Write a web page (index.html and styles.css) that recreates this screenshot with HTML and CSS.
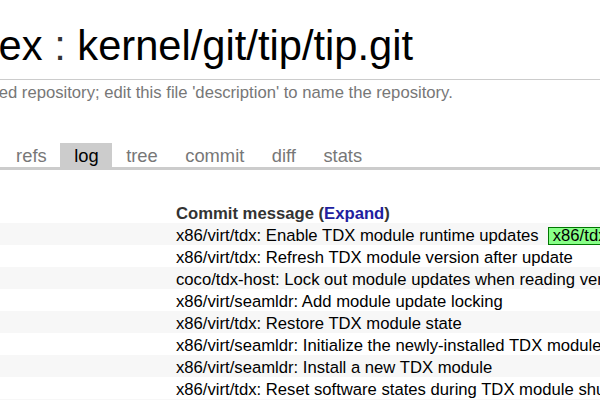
FILE: index.html
```html
<!DOCTYPE html>
<html>
<head>
<meta charset="utf-8">
<title>kernel/git/tip/tip.git - log</title>
<link rel="stylesheet" href="styles.css">
</head>
<body>
<div class="page">
  <header class="header">
    <div class="main"><a href="#">index</a> : <a href="#">kernel/git/tip/tip.git</a></div>
    <div class="sub">Unnamed repository; edit this file 'description' to name the repository.</div>
  </header>
  <nav class="tabs"><a href="#">summary</a><a href="#">refs</a><a class="active" href="#">log</a><a href="#">tree</a><a href="#">commit</a><a href="#">diff</a><a href="#">stats</a></nav>
  <div class="content">
    <table class="list">
      <tr class="head">
        <th class="age">Age</th>
        <th class="msg">Commit message (<a href="#">Expand</a>)</th>
      </tr>
      <tr><td class="age"></td><td class="msg"><a href="#">x86/virt/tdx: Enable TDX module runtime updates</a><span class="deco">x86/tdx</span></td></tr>
      <tr><td class="age"></td><td class="msg"><a href="#">x86/virt/tdx: Refresh TDX module version after update</a></td></tr>
      <tr><td class="age"></td><td class="msg"><a href="#">coco/tdx-host: Lock out module updates when reading version</a></td></tr>
      <tr><td class="age"></td><td class="msg"><a href="#">x86/virt/seamldr: Add module update locking</a></td></tr>
      <tr><td class="age"></td><td class="msg"><a href="#">x86/virt/tdx: Restore TDX module state</a></td></tr>
      <tr><td class="age"></td><td class="msg"><a href="#">x86/virt/seamldr: Initialize the newly-installed TDX module</a></td></tr>
      <tr><td class="age"></td><td class="msg"><a href="#">x86/virt/seamldr: Install a new TDX module</a></td></tr>
      <tr><td class="age"></td><td class="msg"><a href="#">x86/virt/tdx: Reset software states during TDX module shutdown</a></td></tr>
      <tr><td class="age"></td><td class="msg"><a href="#">x86/virt/seamldr: Shut down the TDX module</a></td></tr>
    </table>
  </div>
</div>
</body>
</html>
```
FILE: styles.css
```css
html, body {
  margin: 0;
  padding: 0;
  background: #fff;
  overflow: hidden;
}
body {
  font-family: "Liberation Sans", Arial, sans-serif;
  font-size: 16.67px;
  color: #333;
}
a {
  text-decoration: none;
}
/* page scrolled horizontally by 132px */
.page {
  width: 1400px;
  margin-left: -132px;
}
.header .main {
  font-size: 41.67px;
  line-height: 48px;
  padding: 22px 0 9px 75px;
  white-space: nowrap;
}
.header .main a {
  color: #000;
}
.header .sub {
  border-top: 1px solid #ccc;
  color: #777;
  line-height: 19px;
  padding: 3px 0 1px 77px;
  white-space: nowrap;
}
.tabs {
  display: flex;
  margin-top: 40px;
  padding-left: 31.5px;
  border-bottom: 3px solid #ccc;
}
.tabs a {
  display: block;
  font-size: 18.33px;
  line-height: 18.5px;
  padding: 3.5px 13.75px 1.5px;
  color: #777;
}
.tabs a.active {
  color: #000;
  background: #ccc;
}
.content {
  padding: 31.5px 0 0 48px;
}
.list {
  border-collapse: collapse;
  width: 1200px;
}
.list th, .list td {
  text-align: left;
  line-height: 19px;
  white-space: nowrap;
}
.list th {
  font-weight: bold;
  padding: 3px 8.33px 0;
  color: #333;
}
.list th a {
  color: #20209f;
}
.list td {
  padding: 2.5px 8.33px 0.5px;
  height: 19px;
}
.list td.age, .list th.age {
  width: 235px;
  color: #fff;
}
.list tr:nth-child(even) {
  background: #f7f7f7;
}
.list td a {
  color: #000;
}
.deco {
  display: inline-block;
  color: #000;
  line-height: 16px;
  margin: 0 8.33px 0 9px;
  padding: 0 4.17px;
  background: #88ff88;
  border: 1px solid #007700;
}
```
